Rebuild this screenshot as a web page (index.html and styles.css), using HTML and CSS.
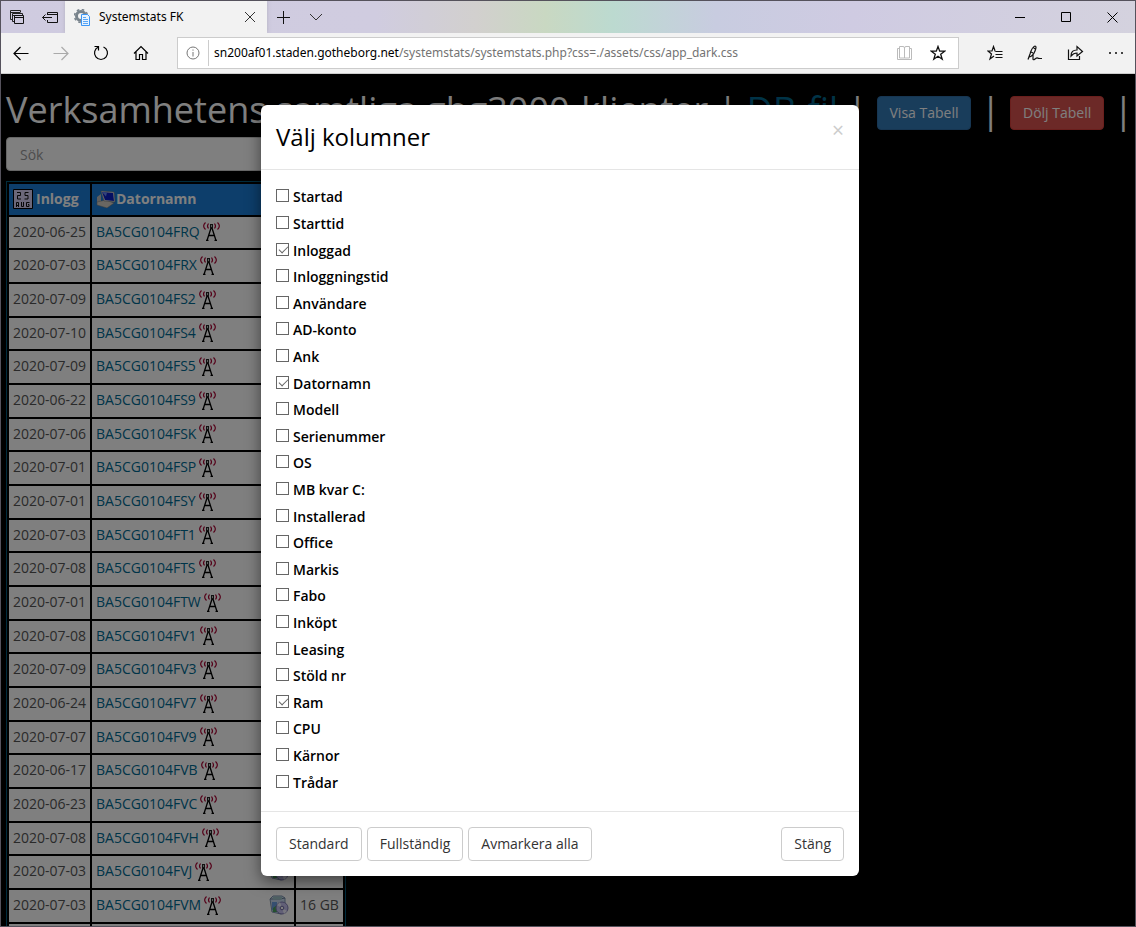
FILE: index.html
```html
<!DOCTYPE html>
<html lang="sv">
<head>
<meta charset="utf-8">
<title>Systemstats FK</title>
<link rel="stylesheet" href="styles.css">
</head>
<body>
<svg class="sprite" aria-hidden="true">
  <symbol id="mast" viewBox="0 0 17 19">
    <g fill="none" stroke="#a80030" stroke-width="1.200"><path d="M2.500.500Q-1.200 4 2.500 7.500M5.500 1.500Q3.500 4 5.500 6.500M14.500.500Q18.200 4 14.500 7.500M11.500 1.500Q13.500 4 11.500 6.500"/></g>
    <path d="M8.500 4.500L4 18.500M8.500 4.500L13 18.500M5.500 13.500H11.500M3 18.500h2.500M11.500 18.500H14" fill="none" stroke="#000" stroke-width="1.300"/>
    <rect x="7" y="2" width="3" height="4" fill="#222"/><rect x="8" y="3" width="1" height="2" fill="#bbb"/>
  </symbol>
  <symbol id="setup" viewBox="0 0 20 20">
    <path d="M1 4l3-3h9l3 2v14l-4 2-9-2z" fill="#c9d9ee" stroke="#7d93ad"/>
    <path d="M1 4h10l5-1" fill="none" stroke="#6d8299"/>
    <path d="M4 1.500h9v3H4z" fill="#9fc3c6"/>
    <path d="M3 7h5v9l-5-1z" fill="#6d9fe0"/><path d="M4 13l4-3v7H4z" fill="#4ba35d"/>
    <circle cx="13" cy="13" r="6" fill="#c4c0ee" stroke="#7f7bb4"/>
    <path d="M13 13l-5-3 3-3zM13 13l5 3-3 3z" fill="#efeefc"/>
    <circle cx="13" cy="13" r="1.800" fill="#fff" stroke="#6c68a0"/>
  </symbol>
</svg>
<div class="window">
  <header class="tabs">
    <div class="tab-tools">
      <button aria-label="Flikar"><svg width="16" height="16"><path d="M3.500 10.500H1.500V1.500H11.500V3.500M1.500 3.500H11M5 12.500H3.500V4.500H13.500V6M3.500 6.500H13" fill="none" stroke="#222"/><path d="M5.500 6.500h9v8h-9zM5.500 8.500h9" fill="#cfcbe0" stroke="#111"/></svg></button>
      <button aria-label="Lägg undan flikar"><svg width="18" height="16"><path d="M6.500 6V3.500H16.500V13.500H6.500V11M7 5.500H16.500M1.500 8.500H11M4.500 5.500L1.500 8.500L4.500 11.500" fill="none" stroke="#111"/></svg></button>
    </div>
    <div class="tab">
      <svg width="17" height="17"><circle cx="7" cy="7" r="4.500" fill="none" stroke="#78838c" stroke-width="3"/><circle cx="7" cy="7" r="6.500" fill="none" stroke="#78838c" stroke-width="1.500" stroke-dasharray="2.600 2.500"/><path d="M7.500 5.500h6l2 2v9h-8z" fill="#e8f3ff" stroke="#3d97f5"/><path d="M9 8.500h3M9 10.500h5M9 12.500h5M9 14.500h5" stroke="#5aa7f7"/></svg>
      <span class="tab-title">Systemstats FK</span>
      <button aria-label="Stäng flik"><svg width="12" height="12"><path d="M1 1l10 10M11 1L1 11" stroke="#333"/></svg></button>
    </div>
    <div class="tab-new">
      <button aria-label="Ny flik"><svg width="13" height="13"><path d="M6.500 0v13M0 6.500h13" stroke="#111"/></svg></button>
      <button aria-label="Flikmeny"><svg width="14" height="8"><path d="M1 1l6 6 6-6" fill="none" stroke="#333"/></svg></button>
    </div>
    <div class="win-controls">
      <button aria-label="Minimera"><svg width="11" height="11"><path d="M0 5.500h10" stroke="#000"/></svg></button>
      <button aria-label="Maximera"><svg width="11" height="11"><path d="M.5.500h9v9h-9z" fill="none" stroke="#000"/></svg></button>
      <button aria-label="Stäng fönster"><svg width="11" height="11"><path d="M.5.500l10 10M10.500.500l-10 10" stroke="#000"/></svg></button>
    </div>
  </header>
  <nav class="toolbar">
    <div class="nav-buttons">
      <button aria-label="Tillbaka"><svg width="16" height="16"><path d="M15.500 8.500H1.500M7.500 2L1 8.500l6.500 6.500" fill="none" stroke="#000" stroke-width="1.200"/></svg></button>
      <button aria-label="Framåt"><svg width="16" height="16"><path d="M.5 8.500h14M8.500 2L15 8.500l-6.500 6.500" fill="none" stroke="#aaa" stroke-width="1.200"/></svg></button>
      <button aria-label="Uppdatera"><svg width="16" height="16"><path d="M5.500 2A6.500 6.500 0 1 0 10.500 2M1.500 1.500H5.500V5.500" fill="none" stroke="#000" stroke-width="1.200"/></svg></button>
      <button aria-label="Start"><svg width="16" height="16"><path d="M1 8.500L8 1.500L15 8.500M3 7V14.500H6.500V9.500H9.500V14.500H13V7" fill="none" stroke="#000" stroke-width="1.200"/></svg></button>
    </div>
    <div class="address">
      <svg width="14" height="14"><circle cx="7" cy="7" r="6" fill="none" stroke="#777"/><path d="M7 6v4.500M7 3.500v1.200" stroke="#777"/></svg>
      <div class="url">sn200af01.staden.gotheborg.net<span>/systemstats/systemstats.php?css=./assets/css/app_dark.css</span></div>
      <button aria-label="Läsvy"><svg width="16" height="14"><path d="M2.500.500H6Q7.500.500 7.500 2V12H2.500zM12.500.500H9Q7.500.500 7.500 2V12H12.500zM2.500 2.500H.5V13.500H14.500V2.500H12.500" fill="none" stroke="#bbb"/></svg></button>
      <button aria-label="Lägg till favorit"><svg width="16" height="16"><path d="M8 1.500l1.700 4.700h5l-4 3 1.500 5L8 11.300 3.800 14.200l1.500-5-4-3h5z" fill="none" stroke="#111" stroke-width="1.300"/></svg></button>
    </div>
    <div class="actions">
      <button aria-label="Favoriter"><svg width="16" height="16"><path d="M8.500 5.800H8L6.500 1.500 5 6H1l3.500 3-1.500 5 4-3M8.500 6.500h7M8.500 9.500h7M8.500 12.500h7" fill="none" stroke="#111" stroke-width="1.200"/></svg></button>
      <button aria-label="Anteckna"><svg width="16" height="16"><path d="M1 14.500L3 9Q5 2 8 1q2 0 0 5Q6 11 2.500 12M6 2Q7.500 4 8.500 4M4 7l2 1M6 9.500V14q0 1.500 2 0t2.500-1 2.500.500h2" fill="none" stroke="#111" stroke-width="1.200"/></svg></button>
      <button aria-label="Dela"><svg width="17" height="16"><path d="M1.500 4.500V14.500H12.500V11M4 11Q4 5 10 5V1.500L15.500 6.500L10 11V8Q6.500 8 4 11z" fill="none" stroke="#111" stroke-width="1.200"/></svg></button>
      <button aria-label="Mer"><svg width="16" height="16"><path d="M1 7h2v2H1zM7 7h2v2H7zM13 7h2v2h-2z" fill="#444"/></svg></button>
    </div>
  </nav>
  <main class="page">
    <h1>Verksamhetens samtliga gbg3000-klienter | <a href="#db">DB-fil</a> | <button class="btn primary">Visa Tabell</button> | <button class="btn danger">Dölj Tabell</button> |</h1>
    <input class="search" type="search" placeholder="Sök" aria-label="Sök">
    <table>
      <thead><tr>
        <th class="c-date"><div class="cell"><svg class="cal" width="20" height="20"><path d="M.5.500h19v19H.5z" fill="#d9d0f4" stroke="#000"/><path d="M4 3.500h3.500v3h-3v3.500H8M15.500 3.500h-3.500v3h3v3.500h-3.500" fill="none" stroke="#111"/><path d="M3.500 18v-4.500h2V18M3.500 16.500h2M8.500 13v4.500h2V13M16.500 13.500h-3v4h2.500v-2h-1" fill="none" stroke="#111"/></svg>Inlogg</div></th>
        <th class="c-name"><div class="cell"><svg width="20" height="18"><path d="M1 7l4-3v10l-4 1z" fill="#bbb"/><path d="M1 12l9-2 8 3-7 5-10-3z" fill="#d4cfc4" stroke="#777" stroke-width=".5"/><path d="M5 1l13 1 1 10-11-1z" fill="#dcdcdc" stroke="#777" stroke-width=".5"/><path d="M6 2l11 1 1 8-9-1z" fill="#0b1fc4"/><path d="M6 2l5 .5-1 4z" fill="#6688f5"/></svg>Datornamn</div></th>
        <th class="c-ram"></th>
      </tr></thead>
      <tbody></tbody>
    </table>
    <div class="backdrop">
      <section class="modal" role="dialog" aria-labelledby="modal-title">
        <header class="modal-head"><h2 id="modal-title">Välj kolumner</h2><button class="close" aria-label="Stäng dialog">×</button></header>
        <div class="modal-body"></div>
        <footer class="modal-foot"><button class="btn">Standard</button><button class="btn">Fullständig</button><button class="btn">Avmarkera alla</button><button class="btn last">Stäng</button></footer>
      </section>
    </div>
  </main>
</div>
<script src="app.js"></script>
</body>
</html>
```
FILE: app.js
```js
const computers = [
  ["2020-06-25", "FRQ"], ["2020-07-03", "FRX"], ["2020-07-09", "FS2"], ["2020-07-10", "FS4"],
  ["2020-07-09", "FS5"], ["2020-06-22", "FS9"], ["2020-07-06", "FSK"], ["2020-07-01", "FSP"],
  ["2020-07-01", "FSY"], ["2020-07-03", "FT1"], ["2020-07-08", "FTS"], ["2020-07-01", "FTW"],
  ["2020-07-08", "FV1"], ["2020-07-09", "FV3"], ["2020-06-24", "FV7"], ["2020-07-07", "FV9"],
  ["2020-06-17", "FVB"], ["2020-06-23", "FVC"], ["2020-07-08", "FVH"], ["2020-07-03", "FVJ", "16 GB"],
  ["2020-07-03", "FVM", "16 GB"], ["", ""]
];
document.querySelector("tbody").innerHTML = computers.map(([date, id, ram = ""]) => id ? `<tr>
  <td>${date}</td>
  <td><div class="cell"><a href="#${id}">BA5CG0104${id}</a><svg class="mast"><use href="#mast"/></svg><svg class="setup"><use href="#setup"/></svg></div></td>
  <td>${ram}</td></tr>` : "<tr><td></td><td></td><td></td></tr>").join("");

const columns = ["Startad", "Starttid", "Inloggad", "Inloggningstid", "Användare", "AD-konto", "Ank",
  "Datornamn", "Modell", "Serienummer", "OS", "MB kvar C:", "Installerad", "Office", "Markis", "Fabo",
  "Inköpt", "Leasing", "Stöld nr", "Ram", "CPU", "Kärnor", "Trådar"];
const shown = ["Inloggad", "Datornamn", "Ram"];
document.querySelector(".modal-body").innerHTML = columns.map(name =>
  `<label><input type="checkbox"${shown.includes(name) ? " checked" : ""}><span>${name}</span></label>`).join("");
```
FILE: styles.css
```css
* { box-sizing: border-box; }
body { margin: 0; background: #000; font: 14px/20px "Open Sans", sans-serif; color: #333; }
button { font: inherit; color: inherit; border: 0; padding: 0; background: none; cursor: pointer; }
svg { display: block; flex: none; }
.sprite { position: absolute; width: 0; height: 0; }
.window { height: 100vh; display: flex; flex-direction: column; border: 1px solid #55525c; overflow: hidden; }

.tabs { display: flex; flex: none; height: 32px; background: linear-gradient(90deg, #cfcbe0 0, #d0cce0 33%, #d2d0ce 42%, #c9d8c2 48%, #bcdad0 54%, #c8cce0 63%, #cfcbe2 75%, #d4d2de 100%); }
.tab-tools { display: flex; gap: 16px; align-items: center; width: 64px; padding-left: 8px; }
.tab { display: flex; align-items: center; width: 202px; padding: 0 11px 0 9px; background: #f2f2f2; box-shadow: 0 0 4px #8886; }
.tab-title { flex: 1; padding-left: 8px; font: 12px/16px "Noto Sans", sans-serif; color: #000; }
.tab-new { display: flex; gap: 19px; align-items: center; padding-left: 10px; }
.win-controls { display: flex; gap: 35px; align-items: center; margin-left: auto; padding-right: 17px; }

.toolbar { display: flex; flex: none; align-items: center; height: 41px; background: #f2f2f2; border-bottom: 1px solid #ccc; }
.nav-buttons { display: flex; gap: 24px; width: 176px; padding-left: 12px; }
.address { display: flex; flex: 1; align-items: center; height: 32px; padding: 0 12px 0 8px; background: #fff; border: 1px solid #ccc; }
.address button + button { margin-left: 17px; }
.url { flex: 1; margin-left: 8px; padding-left: 5px; border-left: 1px solid #ccc; font: 12px/26px "Noto Sans", sans-serif; color: #000; white-space: nowrap; }
.url span { color: #737373; }
.actions { display: flex; gap: 24px; padding: 0 11px 0 28px; }

.page { position: relative; flex: 1; min-height: 0; overflow: hidden; padding: 16px 5px 0; background: #000; }
h1 { margin: 0 0 7px; font-weight: 400; font-size: 36px; line-height: 40px; color: #fff; white-space: nowrap; }
a { color: #006a92; text-decoration: none; }
.btn { height: 34px; padding: 0 12px; border: 1px solid #ccc; border-radius: 4px; background: #fff; font-size: 14px; line-height: 20px; font-weight: 400; color: #333; vertical-align: middle; }
.primary { background: #337ab7; border-color: #2e6da4; color: #fff; }
.danger { background: #d9534f; border-color: #d43f3a; color: #fff; }
.search { display: block; width: 340px; height: 34px; padding: 0 13px; border: 1px solid #ccc; border-radius: 4px; background: #fff; font: inherit; }
.search::placeholder { color: #999; }
table { width: 340px; margin-top: 10px; table-layout: fixed; border: 1px solid #00587a; border-spacing: 2px; }
th, td { height: 32px; padding: 0 4px 2px; background: #fff; color: #555; text-align: left; white-space: nowrap; }
th { height: 31px; background: #1a7cd6; color: #fff; }
tbody tr:nth-child(3n+1) td { height: 31px; }
.c-date { width: 81px; }
.c-ram { width: 47px; }
.cell { display: flex; align-items: center; }
.cal { margin-right: 3px; }
.mast { width: 17px; height: 19px; margin-left: 3px; }
.setup { width: 20px; height: 20px; margin: 0 1px 0 auto; }

.backdrop { position: absolute; inset: 0; padding: 31px 16px 0 0; background: rgba(0, 0, 0, .5); }
.modal { max-width: 598px; margin: 0 auto; background: #fff; border-radius: 6px; box-shadow: 0 5px 15px rgba(0, 0, 0, .5); }
.modal-head { display: flex; justify-content: space-between; padding: 15px; border-bottom: 1px solid #e5e5e5; }
h2 { margin: 0; font-weight: 400; font-size: 24px; line-height: 34px; color: #000; }
.close { align-self: flex-start; font-size: 21px; line-height: 20px; color: #ccc; }
.modal-body { display: grid; grid-auto-rows: 1fr; min-height: 641px; padding: 14px 15px 15px; color: #000; }
label { display: flex; align-items: center; gap: 4px; justify-self: start; font-weight: 600; }
label input { appearance: none; width: 13px; height: 13px; margin: 0 0 3px; border: 1px solid #666; background: #fff; }
label input:checked::before { content: ""; display: block; width: 8px; height: 4px; margin: 2px 0 0 2px; border: solid #666; border-width: 0 0 1px 1px; transform: rotate(-45deg); }
.modal-foot { display: flex; gap: 5px; padding: 15px; border-top: 1px solid #e5e5e5; }
.last { margin-left: auto; }
```
